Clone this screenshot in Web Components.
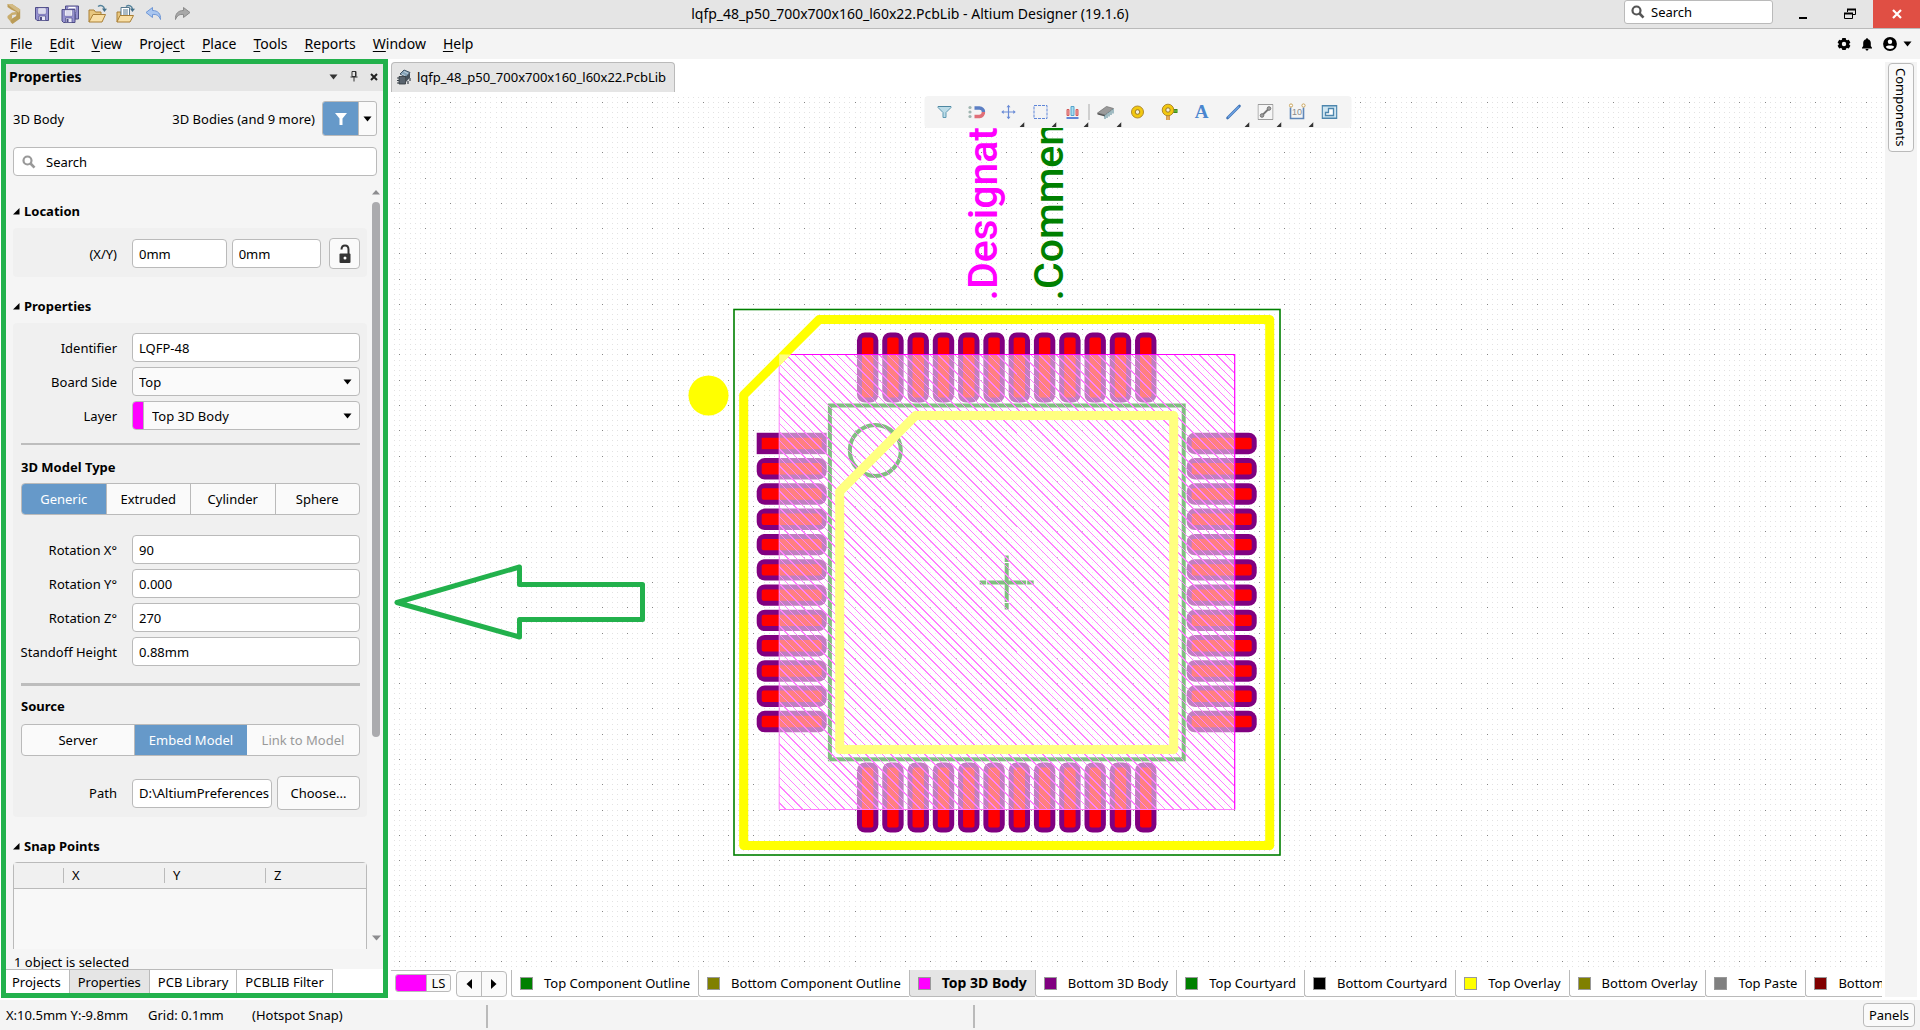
<!DOCTYPE html>
<html lang="en">
<head>
<meta charset="utf-8">
<title>lqfp_48_p50_700x700x160_l60x22.PcbLib - Altium Designer (19.1.6)</title>
<style>
  html, body { height: 100%; margin: 0; }
  body {
    font: 13px/18px "Noto Sans", "Open Sans", sans-serif;
    color: #000;
    background: #fff;
    --line: #bababa;
    --chrome: #f4f4f4;
    --chrome-dark: #e5e5e5;
    --accent: #6699c9;
    --mark: #22b14c;
  }
</style>
</head>
<body>
<app-shell></app-shell>

<script>
const BASE = `
  *, *::before, *::after { box-sizing: border-box; }
  button, input, select { font: inherit; color: inherit; margin: 0; padding: 0; border: 0; background: none; border-radius: 0; }
  button { cursor: default; white-space: nowrap; }
`;

class Part extends HTMLElement {
  connectedCallback() {
    if (this.shadowRoot) return;
    const root = this.attachShadow({ mode: "open" });
    root.innerHTML = `<style>${BASE}${this.css()}</style>${this.html()}`;
  }
  css() { return ""; }
  html() { return "<slot></slot>"; }
}

/* ---------- icons ---------- */
const disk = (x, y) => `<g transform="translate(${x} ${y})">
  <path d="M.5 .5h13v13H2L.5 12z" fill="#9591cf" stroke="#4f4d86"/>
  <path d="M3 1h8v6H3z" fill="#fff" stroke="#6d6aa6" stroke-width=".6"/>
  <path d="M4 3h6M4 5h6" stroke="#b9b7dd"/>
  <path d="M4 9h6.5v4.5H4z" fill="#eceaf8" stroke="#4f4d86" stroke-width=".7"/><path d="M5 10h2v3H5z" fill="#4f4d86"/></g>`;
const folder = `<path d="M1 18V6h5l1.500 2H13v3" fill="#e8c77f" stroke="#a97f35"/><path d="M1 18 5 10.500h12.500L14 18z" fill="#f9dfa6" stroke="#a97f35"/>`;
const swoop = `<path d="M10 2.500c3-2 6-.5 6.500 3" fill="none" stroke="#55839c" stroke-width="1.500"/><path d="m14 4.500 5 .2-2.600 3.400z" fill="#44708a"/>`;
const ICONS = {
  logo: [14, 20, `<path d="M.5 0H5l8.200 5.500v9L5.500 20l-2-2v-2.500L9.200 12V8L4 5.500.5 3z" fill="#bb9c58"/><path d="M.5 0H5l8.200 5.500-1.400 3.200L3.800 3z" fill="#d3bb85"/><path d="M.5 12 5 8.500 9.200 8v2.500L5.200 11l-.4 4-1.300 2.500L.5 14z" fill="#c9ad6e"/>`],
  save: [16, 16, disk(1, 1)],
  saveall: [18, 18, disk(4, .5) + disk(.5, 4)],
  open: [20, 20, folder + swoop],
  openfile: [20, 20, `<path d="M1 18V8h4v3" fill="#e8c77f" stroke="#a97f35"/><path d="M5 3.500h8.500V14H5z" fill="#fff" stroke="#56788e"/><path d="M7 6h5M7 8h5M7 10h5" stroke="#56788e"/><path d="M1 18 4 11.500h13.500L14 18z" fill="#f9dfa6" stroke="#a97f35"/>` + swoop],
  undo: [18, 16, `<path d="M1 6.500 7.500 1.500v3C13 4.500 16 8 15.500 13.500 14 9.500 11.500 8 7.500 8.500v3z" fill="#a9c6f0" stroke="#6f97d6"/>`],
  redo: [18, 16, `<path d="M17 6.500 10.500 1.500v3C5 4.500 2 8 2.500 13.500 4 9.500 6.500 8 10.500 8.500v3z" fill="#a8a8a8" stroke="#8a8a8a"/>`],
  search: [14, 14, `<circle cx="5.500" cy="5.500" r="4" fill="none" stroke="currentColor" stroke-width="2.200"/><path d="m8.500 8.500 4 4.200" stroke="currentColor" stroke-width="2.600"/>`],
  min: [12, 12, `<path d="M2 10h8" stroke="#000" stroke-width="2"/>`],
  restore: [14, 14, `<path d="M4.500 5V2.500h8v5H10" fill="none" stroke="#000"/><path d="M4 2.500h9" stroke="#000" stroke-width="2"/><path d="M1.500 6.500h8v5h-8z" fill="none" stroke="#000"/><path d="M1 6.500h9" stroke="#000" stroke-width="2"/>`],
  close: [10, 10, `<path d="m1 1 8 8M9 1 1 9" stroke="#fff" stroke-width="2.200"/>`],
  gear: [14, 14, `<path fill-rule="evenodd" d="M5.300 1h3.400l.4 1.700 1 .6 1.700-.6 1.600 2.800-1.200 1.200v.8l1.200 1.200-1.600 2.800-1.700-.6-1 .6L8.700 13H5.300l-.4-1.500-1-.6-1.700.6L.6 8.700l1.200-1.200v-.8L.6 5.500l1.600-2.800 1.700.6 1-.6zM7 4.800a2.200 2.200 0 1 0 0 4.400 2.200 2.200 0 0 0 0-4.400z"/>`],
  bell: [12, 14, `<path d="M6 1.200c.8 0 1 .5 1 1C9 2.700 9.800 4.200 9.800 6v3L11 10.800v.7H1v-.7L2.200 9V6C2.200 4.200 3 2.700 5 2.200c0-.5.2-1 1-1zM4.600 12h2.800c0 1-.6 1.500-1.400 1.500S4.600 13 4.600 12z"/>`],
  user: [14, 14, `<circle cx="7" cy="7" r="6.900"/><circle cx="7" cy="4.800" r="2.200" fill="#fff"/><path d="M2.800 9.800C4 8 10 8 11.200 9.800 10 12.800 4 12.800 2.800 9.800z" fill="#fff"/>`],
  caret: [9, 6, `<path d="M.5 .5h8L4.500 5.500z" fill="currentColor"/>`],
  left: [6, 10, `<path d="M6 0v10L.5 5z"/>`],
  right: [6, 10, `<path d="M0 0v10l5.500-5z"/>`],
  up: [8, 5, `<path d="M4 0 8 4.500H0z" fill="#8c8c8f"/>`],
  down: [9, 6, `<path d="M4.500 5.500 9 .5H0z" fill="#8c8c8f"/>`],
  fold: [7, 7, `<path d="M6.500 0v6.500H0z"/>`],
  corner: [5, 5, `<path d="M5 0v5H0z" fill="#333"/>`],
  pin: [8, 11, `<path d="M2 .5h4v5H2z" fill="none" stroke="#333"/><path d="M5.500 1v4M.5 6h7M4 6v4.500" stroke="#333"/>`],
  cross: [8, 8, `<path d="m1 1 6 6M7 1 1 7" stroke="#222" stroke-width="2"/>`],
  funnel: [14, 14, `<path d="M1 1h12L8.500 6.500V13h-3V6.500z" fill="#fff"/>`],
  lock: [14, 20, `<path d="M3.500 5.500C3.500 0 10.500 0 10.500 5.500V10" fill="none" stroke="#333" stroke-width="2"/><rect x="1.500" y="9.500" width="11" height="9.500" rx="1" fill="#333"/><circle cx="7" cy="14" r="1.500" fill="#fff"/>`],
  chip3d: [14, 16, `<path d="m3 5 4-4 6 2.500-4 4.500z" fill="#86a3b8" stroke="#3f5263"/><path d="M9 8l4-4.500v5L9 13z" fill="#47525c"/><path d="M2 7.500h6.500V15H2z" fill="#5a646e" stroke="#2f353b" stroke-width=".8"/><path d="M0 9h2M0 11.500h2M0 14h2M11 12v3M13 9v3" stroke="#39424b" stroke-width="1.200"/><path d="m4.500 5 3.500 1.500M7 2.500l4 2" stroke="#bed0dd"/>`],
  tFilter: [16, 16, `<path d="M1.500 3.500v-1h13v1L9.500 8.500v5h-3v-5z" fill="#bcdce8" stroke="#5f9ab3"/><path d="M1.500 2.500h13" stroke="#4d87a1"/>`],
  tMagnet: [18, 16, `<path d="M7 4h5a4 4 0 0 1 4 4" fill="none" stroke="#5c7fc4" stroke-width="3.500"/><path d="M7 12.500h5A4.500 4.500 0 0 0 16 8" fill="none" stroke="#e06f78" stroke-width="3.500"/><circle cx="2.500" cy="3.500" r="1.600" fill="#9fb5b1"/><circle cx="2.500" cy="8" r="1.600" fill="#9fb5b1"/><circle cx="2.500" cy="12.500" r="1.600" fill="#9fb5b1"/>`],
  tMove: [16, 16, `<path d="M8 2v12M2 8h12" stroke="#6a8bd6" stroke-width="1.200"/><path d="m8 .8-2 2.400h4zM8 15.200l-2-2.400h4zM.8 8l2.400-2v4zM15.200 8l-2.400-2v4z" fill="#6a8bd6"/>`],
  tSelect: [16, 16, `<path d="M1.500 1.500h13v13h-13z" fill="none" stroke="#5f86d8" stroke-dasharray="3 1"/>`],
  tAlign: [16, 16, `<path d="M6.500 2.500h3v9h-3z" fill="#a8dcf0" stroke="#55a4cc"/><path d="M2.500 5.500h2v6h-2zM11.500 5.500h2v6h-2z" fill="#f1a5a5" stroke="#d35a5a"/><path d="M2 14h12" stroke="#5f86d8" stroke-width="2"/>`],
  tChip: [18, 16, `<path d="M1 9 10 2.500l7 2L8.500 11z" fill="#9a9a9a" stroke="#777" stroke-width=".8"/><path d="m1 9 7.500 2v1.500L1 10.500z" fill="#555"/><path d="M8.500 11v4M10.500 9.500v4.500M12.500 8v4.500M14.500 6.500v4.500M16.500 5v4.500" stroke="#4e8391"/>`],
  tPad: [14, 14, `<circle cx="7" cy="7" r="6" fill="#f2c80f" stroke="#b08a2e"/><circle cx="7" cy="7" r="2.300" fill="#f5f0d8" stroke="#9a7724"/>`],
  tVia: [18, 18, `<path d="M8 8h9" stroke="#3c8a1c" stroke-width="4"/><path d="M11 8h6" stroke="#7ed34c" stroke-width="1.200"/><path d="M7.500 9v8" stroke="#c87d23" stroke-width="3.500"/><path d="M7.500 12v5" stroke="#fbcf77" stroke-width="1.200"/><circle cx="7.500" cy="7" r="5.800" fill="#f2c80f" stroke="#b08a2e"/><circle cx="7.500" cy="7" r="2.200" fill="#f5f0d8" stroke="#9a7724"/>`],
  tText: [16, 18, `<text x="8" y="15" text-anchor="middle" font-family="Liberation Serif, serif" font-weight="700" font-size="19" fill="#4a86cf">A</text>`],
  tLine: [16, 16, `<path d="M2 14 14 2" stroke="#3f72b5" stroke-width="2.600" stroke-linecap="round"/><path d="M2.500 13.500 13.500 2.500" stroke="#6ea4e4" stroke-width="1.200"/>`],
  tConn: [16, 16, `<path d="M.5 .5h15v15H.5z" fill="#f6f6f6" stroke="#9b9b9b"/><path d="m4.500 11.500 7-7" stroke="#777" stroke-width="1.800"/><circle cx="4.500" cy="11.500" r="1.800" fill="#a0a0a0" stroke="#777"/><circle cx="11.500" cy="4.500" r="1.800" fill="#a0a0a0" stroke="#777"/>`],
  tDim: [18, 18, `<path d="M2 4.500v11h13v-11" fill="none" stroke="#5f86b8" stroke-width="1.600"/><circle cx="2.500" cy="2.500" r="1.600" fill="#fff" stroke="#c9a45a"/><circle cx="15" cy="2.500" r="1.600" fill="#fff" stroke="#c9a45a"/><text x="8.500" y="12" text-anchor="middle" font-family="Liberation Sans, sans-serif" font-size="9" fill="#8a8a8a">10</text>`],
  tRegion: [16, 16, `<path d="M.7 1.700h14.600v12.600H.7z" fill="#cfe6f2" stroke="#4d86ad" stroke-width="1.400"/><path d="M4 11.500V8.500h3v-4h5v7z" fill="#fff" stroke="#4d86ad" stroke-width="1.300"/>`],
};
class UiIcon extends Part {
  css() { return `:host { display: inline-flex; flex: none; } svg { display: block; }`; }
  html() {
    const [w, h, body] = ICONS[this.getAttribute("name")];
    return `<svg width="${w}" height="${h}" viewBox="0 0 ${w} ${h}" aria-hidden="true">${body}</svg>`;
  }
}
customElements.define("ui-icon", UiIcon);

/* ---------- window chrome ---------- */
class TitleBar extends Part {
  css() { return `
    :host { display: flex; height: 29px; background: var(--chrome-dark); border-bottom: 1px solid var(--line); }
    .quick { display: flex; }
    .quick button { width: 28px; height: 28px; display: grid; place-items: center; }
    h1 { flex: 1; margin: 0; font: inherit; font-size: 14px; line-height: 28px; text-align: center; white-space: nowrap; }
    label { display: flex; align-items: center; gap: 6px; width: 149px; height: 24px; padding: 0 6px; color: #555;
      background: #fff; border: 1px solid var(--line); border-radius: 3px; }
    input { width: 100%; min-width: 0; color: #000; outline: none; }
    input::placeholder { color: #000; opacity: 1; }
    .win { display: flex; padding-left: 6px; }
    .win button { width: 47px; display: grid; place-items: center; }
    .win .close { background: #e04f44; }
  `; }
  html() { return `
    <div class="quick">
      ${["logo", "save", "saveall", "open", "openfile", "undo", "redo"].map(n => `<button aria-label="${n}"><ui-icon name="${n}"></ui-icon></button>`).join("")}
    </div>
    <h1>lqfp_48_p50_700x700x160_l60x22.PcbLib - Altium Designer (19.1.6)</h1>
    <label><ui-icon name="search"></ui-icon><input type="text" placeholder="Search" aria-label="Search"></label>
    <div class="win">
      <button aria-label="Minimize"><ui-icon name="min"></ui-icon></button>
      <button aria-label="Restore"><ui-icon name="restore"></ui-icon></button>
      <button aria-label="Close" class="close"><ui-icon name="close"></ui-icon></button>
    </div>`; }
}
customElements.define("title-bar", TitleBar);

class MenuBar extends Part {
  css() { return `
    :host { display: flex; align-items: center; justify-content: space-between; height: 30px; padding: 0 8px 0 10px;
      background: var(--chrome); font-size: 14px; }
    nav { display: flex; gap: 17px; }
    nav button u { text-underline-offset: 2px; }
    .right { display: flex; align-items: center; gap: 10px; }
    .right button { display: flex; align-items: center; gap: 6px; }
  `; }
  html() {
    const items = ["_File", "_Edit", "_View", "Proje_ct", "_Place", "_Tools", "_Reports", "_Window", "_Help"];
    return `
    <nav>${items.map(t => `<button>${t.replace(/_(.)/, "<u>$1</u>")}</button>`).join("")}</nav>
    <div class="right">
      <button aria-label="Settings"><ui-icon name="gear"></ui-icon></button>
      <button aria-label="Notifications"><ui-icon name="bell"></ui-icon></button>
      <button aria-label="Account"><ui-icon name="user"></ui-icon><ui-icon name="caret"></ui-icon></button>
    </div>`; }
}
customElements.define("menu-bar", MenuBar);

/* ---------- properties panel ---------- */
class FieldRow extends Part {
  css() { return `
    :host { display: flex; align-items: center; }
    label { flex: none; width: 96px; margin-right: 15px; display: flex; justify-content: flex-end; white-space: nowrap; }
    .ctl { flex: 1; min-width: 0; display: flex; align-items: center; position: relative; height: 29px; background: #fff;
      border: 1px solid var(--line); border-radius: 4px; overflow: hidden; }
    .ctl.sel { background: #fafafa; }
    input, select { flex: 1; min-width: 0; height: 100%; padding: 0 0 0 6px; outline: none; appearance: none; }
    .swatch { width: 11px; height: 100%; background: #f0f; border-right: 1px solid var(--line); }
    .swatch + select { padding-left: 8px; }
    .ctl ui-icon { position: absolute; right: 7px; pointer-events: none; }
  `; }
  html() {
    const label = this.getAttribute("label"), value = this.getAttribute("value");
    const sel = this.hasAttribute("choice"), sw = this.hasAttribute("swatch");
    return `<label for="f">${label}</label>` + (sel
      ? `<span class="ctl sel">${sw ? '<span class="swatch"></span>' : ""}<select id="f"><option>${value}</option></select><ui-icon name="caret"></ui-icon></span>`
      : `<span class="ctl"><input id="f" type="text" value="${value}"></span>`) + `<slot></slot>`;
  }
}
customElements.define("field-row", FieldRow);

class SegmentBar extends Part {
  css() { return `
    :host { display: flex; height: 32px; border: 1px solid var(--line); border-radius: 4px; background: #fafafa; overflow: hidden; }
    button { flex: 1 1 0; }
    button + button { border-left: 1px solid var(--line); }
    button[aria-pressed=true] { background: var(--accent); color: #fff; }
    button:disabled { color: #999; border-left: 0; }
  `; }
  html() {
    return this.getAttribute("items").split("|").map((t, i) => {
      const on = i === +this.getAttribute("active"), off = i === +(this.getAttribute("off") ?? -1);
      return `<button aria-pressed="${on}"${off ? " disabled" : ""}>${t}</button>`;
    }).join("");
  }
}
customElements.define("segment-bar", SegmentBar);

class PanelSection extends Part {
  css() { return `
    :host { display: block; }
    h3 { display: flex; align-items: center; gap: 4px; margin: 0 0 7px; font-size: 13px; line-height: 20px; }
    .box { background: #f0f0f0; border-radius: 4px; padding: 10px 7px 7px 8px; }
    :host([bare]) h3 { margin-bottom: 6px; }
    :host([bare]) .box { background: none; padding: 0; }
  `; }
  html() { return `<h3><ui-icon name="fold"></ui-icon>${this.getAttribute("heading")}</h3><div class="box"><slot></slot></div>`; }
}
customElements.define("panel-section", PanelSection);

class PropertiesPanel extends Part {
  css() { return `
    :host { display: flex; flex-direction: column; border: 5px solid var(--mark); background: #f5f5f5; min-height: 0; }
    header { display: flex; align-items: center; gap: 12px; height: 27px; padding: 0 5px 2px 3px; background: var(--chrome-dark); color: #333; flex: none; }
    h2 { flex: 1; margin: 0; font-size: 14px; line-height: 20px; color: #000; }
    header button { display: flex; }
    .kind { display: flex; align-items: center; justify-content: space-between; padding: 10px 6px 0 7px; flex: none; }
    .kind div { display: flex; align-items: center; gap: 7px; }
    .split { display: flex; height: 35px; border: 1px solid var(--line); border-radius: 3px; background: #fafafa; overflow: hidden; }
    .split button { width: 17px; display: grid; place-items: center; }
    .split .on { width: 36px; background: var(--accent); border-right: 1px solid var(--line); }
    .find { display: flex; align-items: center; gap: 10px; height: 29px; margin: 11px 6px 8px 7px; padding: 0 8px; flex: none;
      background: #fff; border: 1px solid var(--line); border-radius: 4px; color: #999; }
    .find input { flex: 1; color: #000; outline: none; }
    .find input::placeholder { color: #000; opacity: 1; }
    .scroll { flex: 1; min-height: 0; display: flex; overflow: hidden; }
    .content { flex: 1; min-width: 0; padding: 17px 5px 0 7px; }
    .bar { flex: none; width: 11px; padding: 6px 3px 8px 0; display: flex; flex-direction: column; align-items: center; gap: 7px; }
    .thumb { width: 8px; flex: 0 1 535px; border-radius: 4px; background: #ababae; }
    .bar ui-icon:last-child { margin-top: auto; }
    panel-section + panel-section { margin-top: 19px; }
    .rows { display: flex; flex-direction: column; gap: 5px; }
    .xy { padding-bottom: 1px; display: flex; align-items: center; }
    .xy > label { width: 96px; margin-right: 15px; text-align: right; }
    .xy input { flex: 14 1 0; min-width: 0; height: 29px; padding: 0 6px; background: #fff; border: 1px solid var(--line); border-radius: 4px; }
    .xy label + input { flex-grow: 15; }
    .xy input + input { margin-left: 5px; }
    .xy button { width: 31px; height: 31px; margin-left: 8px; display: grid; place-items: center; background: #fafafa; border: 1px solid var(--line); border-radius: 4px; }
    hr { height: 2px; margin: 13px 0 12px; border: 0; background: #bdbdbd; }
    hr.wide { height: 3px; margin: 17px 0 10px; }
    h4 { margin: 0 0 6px; font-size: 13px; line-height: 20px; }
    hr.wide + h4 { margin-bottom: 8px; }
    segment-bar { margin-bottom: 20px; }
    .choose { height: 34px; width: 83px; margin-left: 5px; background: #fafafa; border: 1px solid var(--line); border-radius: 4px; }
    .grid { height: 200px; border: 1px solid var(--line); border-radius: 4px; background: #f8f8f8; }
    table { width: 100%; border-collapse: collapse; table-layout: fixed; background: #f0f0f0; border-bottom: 1px solid var(--line); }
    th { height: 25px; padding: 1px 0 0; font-weight: 400; text-align: left; }
    th:first-child { width: 49px; }
    th:nth-child(2), th:nth-child(3) { width: 101px; }
    th span { display: block; line-height: 15px; padding-left: 8px; border-left: 1px solid var(--line); }
    .msg { padding: 4px 8px 0; height: 20px; flex: none; line-height: 18px; white-space: nowrap; }
    footer { display: flex; height: 24px; flex: none; background: #fff; font-size: 13px; }
    footer button { padding: 0 8px; border: solid var(--line); border-width: 1px 1px 0 0; }
    footer button:first-child { padding-left: 6px; }
    footer button.on { background: var(--chrome-dark); }
  `; }
  html() { return `
    <header><h2>Properties</h2>
      <button aria-label="Options"><ui-icon name="caret"></ui-icon></button>
      <button aria-label="Pin"><ui-icon name="pin"></ui-icon></button>
      <button aria-label="Close panel"><ui-icon name="cross"></ui-icon></button></header>
    <div class="kind"><span>3D Body</span><div><span>3D Bodies (and 9 more)</span>
      <span class="split"><button class="on" aria-label="Filter"><ui-icon name="funnel"></ui-icon></button><button aria-label="Filter options"><ui-icon name="caret"></ui-icon></button></span></div></div>
    <label class="find"><ui-icon name="search"></ui-icon><input type="text" placeholder="Search" aria-label="Search properties"></label>
    <div class="scroll">
      <div class="content">
        <panel-section heading="Location">
          <div class="xy"><label for="x">(X/Y)</label><input id="x" type="text" value="0mm"><input type="text" value="0mm" aria-label="Y"><button aria-label="Lock"><ui-icon name="lock"></ui-icon></button></div>
        </panel-section>
        <panel-section heading="Properties">
          <div class="rows">
            <field-row label="Identifier" value="LQFP-48"></field-row>
            <field-row label="Board Side" value="Top" choice></field-row>
            <field-row label="Layer" value="Top 3D Body" choice swatch></field-row>
          </div>
          <hr>
          <h4>3D Model Type</h4>
          <segment-bar items="Generic|Extruded|Cylinder|Sphere" active="0"></segment-bar>
          <div class="rows">
            <field-row label="Rotation X°" value="90"></field-row>
            <field-row label="Rotation Y°" value="0.000"></field-row>
            <field-row label="Rotation Z°" value="270"></field-row>
            <field-row label="Standoff Height" value="0.88mm"></field-row>
          </div>
          <hr class="wide">
          <h4>Source</h4>
          <segment-bar items="Server|Embed Model|Link to Model" active="1" off="2"></segment-bar>
          <field-row label="Path" value="D:\\AltiumPreferences"><button class="choose">Choose...</button></field-row>
        </panel-section>
        <panel-section heading="Snap Points" bare>
          <div class="grid"><table><thead><tr><th></th><th><span>X</span></th><th><span>Y</span></th><th><span>Z</span></th></tr></thead></table></div>
        </panel-section>
      </div>
      <div class="bar"><ui-icon name="up"></ui-icon><div class="thumb"></div><ui-icon name="down"></ui-icon></div>
    </div>
    <div class="msg">1 object is selected</div>
    <footer><button>Projects</button><button class="on">Properties</button><button>PCB Library</button><button>PCBLIB Filter</button></footer>`; }
}
customElements.define("properties-panel", PropertiesPanel);

/* ---------- footprint drawing ---------- */
class PcbBoard extends Part {
  css() { return `
    :host { display: block; overflow: hidden; min-width: 0; min-height: 0; contain: size; }
    svg { display: block; width: 100%; height: 100%; }
  `; }
  html() {
    const CX = 615.7, CY = 490.5, P = 25.28;
    let minor = "", major = "";
    for (let j = -96; j <= 180; j++) {
      const y = Math.floor(CY + j * P / 5);
      for (let i = -121; i <= 380; i++) {
        const x = Math.floor(CX + i * P / 5);
        if (i % 5 === 0 && j % 5 === 0) major += `M${x} ${y}h1v1h-1z`;
        else minor += `M${x} ${y}h1v1h-1z`;
      }
    }
    const pad = (x, y, w, h, r) =>
      `<rect x="${x}" y="${y}" width="${w}" height="${h}" rx="${r}" fill="#800080"/><rect x="${x + 5}" y="${y + 5}" width="${w - 10}" height="${h - 10}" rx="${Math.min(r, 2)}" fill="#f00"/>`;
    let pads = "";
    for (let k = 0; k < 12; k++) {
      const c = (k - 5.5) * P - 10.7;
      pads += pad(c, -250, 21.4, 70, 8) + pad(c, 180, 21.4, 70, 8)
            + pad(-250, c, 70, 21.4, k ? 8 : 0) + pad(180, c, 70, 21.4, 8);
    }
    let hatch = "";
    for (let d = -456; d < 456; d += P / 3) hatch += `M${(-228 + d).toFixed(1)} -228l456 456`;
    const ring = (r, c) => `M${-r + c} ${-r}H${r}V${r}H${-r}V${-r + c}z`;
    return `<svg role="img" aria-label="LQFP-48 footprint">
      <defs><clipPath id="body"><rect x="-227.500" y="-228" width="455.500" height="455"/></clipPath></defs>
      <g shape-rendering="crispEdges"><path d="${minor}" fill="#e2e2e2"/><path d="${major}" fill="#858585"/></g>
      <g transform="translate(${CX} ${CY})">
        <rect x="-272.700" y="-273" width="546" height="545.500" fill="none" stroke="#008000" stroke-width="1.600"/>
        ${pads}
        <g fill="none" stroke="#008000" stroke-width="4">
          <rect x="-176.800" y="-177" width="353.800" height="353.800"/>
          <circle cx="-131.400" cy="-132" r="25.500"/>
          <path d="M-27 0H27M0-27V27"/>
        </g>
        <g clip-path="url(#body)">
          <rect x="-228" y="-228" width="456" height="456" fill="#fff" opacity=".5"/>
          <path d="${hatch}" stroke="#ff80ff" shape-rendering="crispEdges"/>
        </g>
        <path d="M-227.500 -228V227H228" fill="none" stroke="#ff80ff"/>
        <path d="M-228 -228H228V227" fill="none" stroke="#f0f" stroke-width="1.200"/>
        <path d="M-20 -3v6M20 -3v6M-3 -20h6M-3 20h6" stroke="#fff"/>
        <g fill="none" stroke-width="9" stroke-linejoin="round">
          <path d="${ring(263, 75.5)}" stroke="#ff0"/>
          <path d="${ring(263, 75.5)}" stroke="#ffff80" clip-path="url(#body)"/>
          <path d="${ring(167, 76)}" stroke="#ffff80"/>
        </g>
        <circle cx="-298.200" cy="-187" r="20" fill="#ff0"/>
        <g font-family="Roboto, sans-serif" font-size="41" font-weight="500">
          <text transform="translate(-10 -282) rotate(-90)" fill="#f0f">.Designat</text>
          <text transform="translate(56 -282) rotate(-90)" fill="#008000">.Comment</text>
        </g>
        <path d="M-609.700 20 -487.200 -15.500V2H-364.200V37H-487.200V54.500z" fill="none" stroke="#22b14c" stroke-width="5" stroke-linejoin="round"/>
      </g>
    </svg>`;
  }
}
customElements.define("pcb-board", PcbBoard);

class ActiveBar extends Part {
  css() { return `
    :host { display: flex; align-items: center; height: 32px; padding: 0 6px 0 4px; background: var(--chrome); border-radius: 4px; }
    button { width: 32px; height: 32px; display: grid; place-items: center; position: relative; }
    .more { position: absolute; right: 0; bottom: 1px; }
    i { width: 1px; height: 16px; background: #aaa; }
  `; }
  html() {
    const tools = ["tFilter", "tMagnet", "tMove+", "tSelect+", "tAlign+", "|", "tChip+", "tPad", "tVia", "tText", "tLine+", "tConn+", "tDim+", "tRegion"];
    return tools.map(t => t === "|" ? "<i></i>" :
      `<button aria-label="${t.slice(1).replace("+", "")}"><ui-icon name="${t.replace("+", "")}"></ui-icon>${t.endsWith("+") ? '<ui-icon class="more" name="corner"></ui-icon>' : ""}</button>`).join("");
  }
}
customElements.define("active-bar", ActiveBar);

class LayerTabs extends Part {
  css() { return `
    :host { display: flex; height: 27px; overflow: hidden; padding-right: 3px; }
    .set { flex: none; width: 65px; padding: 3px 5px 0 4px; border-top: 1px solid var(--line); }
    .set button { display: flex; width: 56px; height: 18px; line-height: 16px; border: 1px solid var(--line); border-radius: 3px; overflow: hidden; background: #fafafa; }
    .set i { width: 31px; height: 100%; background: #f0f; border-right: 1px solid var(--line); }
    .set span { flex: 1; text-align: center; }
    .nav { display: flex; flex: none; width: 51px; margin: 1px 4px 0 0; border: 1px solid var(--line); border-radius: 4px; background: #fafafa; }
    .nav button { flex: 1; display: grid; place-items: center; }
    .nav button + button { border-left: 1px solid var(--line); }
    .tabs { display: flex; flex: 1; min-width: 0; overflow: hidden; }
    .tabs button { display: flex; align-items: center; gap: 11px; flex: none; padding: 0 8px; border: solid var(--line); border-width: 0 0 1px 1px; border-radius: 0 0 0 3px; }
    .tabs button.on { background: var(--chrome-dark); font-weight: 700; font-size: 14px; }
    .tabs i { width: 13px; height: 13px; border: 1px solid #999; }
  `; }
  html() {
    const layers = [["Top Component Outline", "#008000"], ["Bottom Component Outline", "#808000"], ["Top 3D Body", "#ff00ff"], ["Bottom 3D Body", "#800080"],
      ["Top Courtyard", "#008000"], ["Bottom Courtyard", "#000"], ["Top Overlay", "#ffff00"], ["Bottom Overlay", "#808000"], ["Top Paste", "#808080"], ["Bottom", "#800000"]];
    return `<div class="set"><button><i></i><span>LS</span></button></div>
      <div class="nav"><button aria-label="Previous"><ui-icon name="left"></ui-icon></button><button aria-label="Next"><ui-icon name="right"></ui-icon></button></div>
      <div class="tabs">${layers.map(([n, c], k) => `<button${k === 2 ? ' class="on"' : ""}><i style="background:${c}"></i>${n}</button>`).join("")}</div>`;
  }
}
customElements.define("layer-tabs", LayerTabs);

class DocView extends Part {
  css() { return `
    :host { display: flex; flex-direction: column; min-width: 0; min-height: 0; padding: 3px 0 3px 3px; background: #fff; }
    .tabs { display: flex; flex: none; }
    .tabs button { display: flex; align-items: center; gap: 6px; height: 30px; padding: 0 8px 2px 5px; background: var(--chrome-dark);
      border: 1px solid var(--line); border-bottom: 0; border-radius: 4px 4px 0 0; }
    .stage { position: relative; flex: 1; min-height: 0; display: grid; padding-bottom: 2px; margin-bottom: 1px; }
    active-bar { position: absolute; top: 4px; left: 50%; transform: translateX(-50%); }
  `; }
  html() { return `
    <div class="tabs"><button><ui-icon name="chip3d"></ui-icon>lqfp_48_p50_700x700x160_l60x22.PcbLib</button></div>
    <div class="stage"><pcb-board></pcb-board><active-bar></active-bar></div>
    <layer-tabs></layer-tabs>`; }
}
customElements.define("doc-view", DocView);

class SideRail extends Part {
  css() { return `
    :host { display: block; width: 32px; margin: 3px 3px 3px 0; padding: 1px 3px; background: var(--chrome); }
    button { writing-mode: vertical-rl; width: 26px; height: 89px; background: #fafafa; border: 1px solid var(--line); border-radius: 4px; text-align: center; line-height: 24px; }
  `; }
  html() { return `<button>Components</button>`; }
}
customElements.define("side-rail", SideRail);

class StatusBar extends Part {
  css() { return `
    :host { display: flex; align-items: center; height: 30px; background: var(--chrome); padding: 0 5px 0 0; }
    .pos { display: flex; flex: none; width: 486px; padding-left: 6px; white-space: nowrap; }
    .pos span:nth-child(1) { width: 142px; }
    .pos span:nth-child(2) { width: 104px; }
    .cell { align-self: stretch; margin: 5px 0 2px; width: 487px; border-left: 2px solid var(--line); }
    .cell + .cell { flex: 1; }
    button { height: 24px; padding: 0 5px; background: #fafafa; border: 1px solid var(--line); border-radius: 4px; }
  `; }
  html() { return `<div class="pos"><span>X:10.5mm Y:-9.8mm</span><span>Grid: 0.1mm</span><span>(Hotspot Snap)</span></div>
    <div class="cell"></div><div class="cell"></div><button>Panels</button>`; }
}
customElements.define("status-bar", StatusBar);

class AppShell extends Part {
  css() { return `
    :host { display: grid; grid-template-rows: auto auto minmax(0, 1fr) auto; height: 100vh; overflow: hidden; }
    main { display: grid; grid-template-columns: 388px minmax(0, 1fr) auto; min-height: 0; }
    properties-panel { margin: 0 0 2px 1px; }
  `; }
  html() { return `<title-bar></title-bar><menu-bar></menu-bar>
    <main><properties-panel></properties-panel><doc-view></doc-view><side-rail></side-rail></main>
    <status-bar></status-bar>`; }
}
customElements.define("app-shell", AppShell);
</script>
</body>
</html>
